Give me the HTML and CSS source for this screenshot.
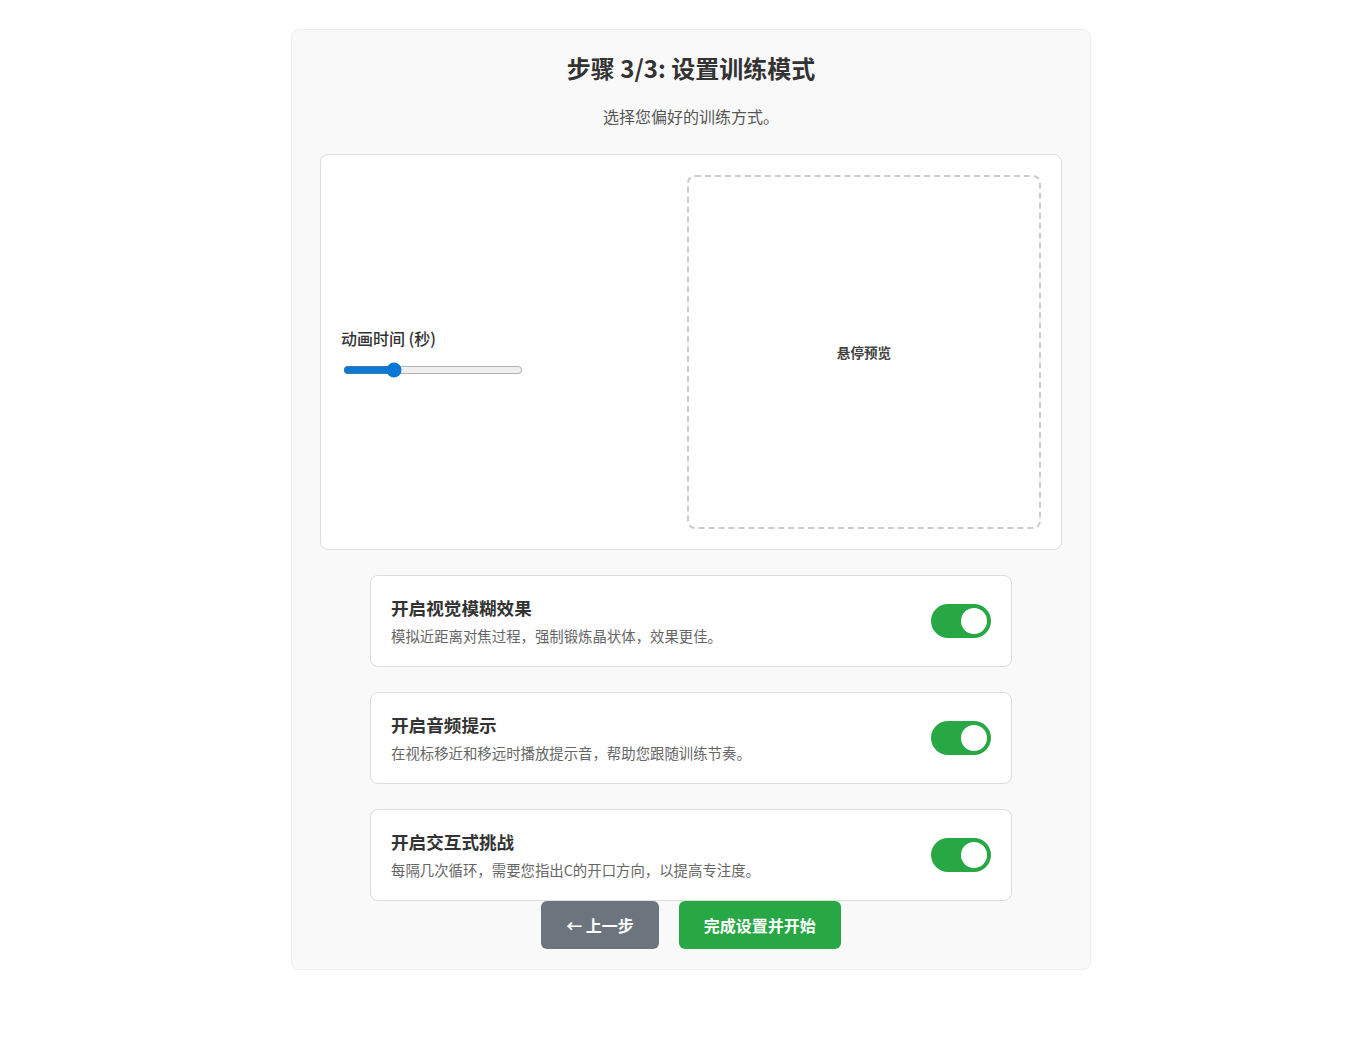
FILE: index.html
```html
<!DOCTYPE html>
<html lang="zh-CN">
<head>
    <meta charset="UTF-8">
    <meta name="viewport" content="width=device-width, initial-scale=1.0">
    <title>设置训练模式</title>
    <link rel="stylesheet" href="styles.css">
</head>
<body>
    <div class="setup-card">
        <h2 class="title">步骤 3/3: 设置训练模式</h2>
        <p class="subtitle">选择您偏好的训练方式。</p>

        <div class="preview-panel">
            <div class="controls">
                <label for="duration" class="control-label">动画时间 (秒)</label>
                <input type="range" id="duration" class="slider" min="0" max="100" value="26">
            </div>
            <div class="hover-box">
                <span class="hover-text">悬停预览</span>
            </div>
        </div>

        <div class="option">
            <div class="option-text">
                <p class="option-title">开启视觉模糊效果</p>
                <p class="option-desc">模拟近距离对焦过程，强制锻炼晶状体，效果更佳。</p>
            </div>
            <label class="switch">
                <input type="checkbox" checked>
                <span class="knob"></span>
            </label>
        </div>

        <div class="option">
            <div class="option-text">
                <p class="option-title">开启音频提示</p>
                <p class="option-desc">在视标移近和移远时播放提示音，帮助您跟随训练节奏。</p>
            </div>
            <label class="switch">
                <input type="checkbox" checked>
                <span class="knob"></span>
            </label>
        </div>

        <div class="option">
            <div class="option-text">
                <p class="option-title">开启交互式挑战</p>
                <p class="option-desc">每隔几次循环，需要您指出C的开口方向，以提高专注度。</p>
            </div>
            <label class="switch">
                <input type="checkbox" checked>
                <span class="knob"></span>
            </label>
        </div>

        <div class="actions">
            <button class="btn btn-back">&larr; 上一步</button>
            <button class="btn btn-start">完成设置并开始</button>
        </div>
    </div>
</body>
</html>
```

FILE: styles.css
```css
html, body {
    margin: 0;
    background: #fff;
    font-family: "Noto Sans CJK SC", "Noto Sans", sans-serif;
    color: #333;
}
body {
    padding: 29px 0 0 10px;
}
.setup-card {
    width: 742px;
    margin: 0 auto;
    padding: 21px 28px 20px 28px;
    background-color: #f9f9f9;
    border: 1px solid #eee;
    border-radius: 8px;
}
.title {
    margin: 0;
    text-align: center;
    font-size: 24px;
    line-height: 34px;
    font-weight: 700;
    color: #333;
}
.subtitle {
    margin: 19px 0 0 0;
    text-align: center;
    font-size: 16px;
    line-height: 24px;
    color: #555;
}
.preview-panel {
    margin-top: 26px;
    display: flex;
    align-items: center;
    gap: 20px;
    padding: 20px;
    background: #fff;
    border: 1px solid #ddd;
    border-radius: 8px;
}
.controls {
    flex: 1;
    display: flex;
    flex-direction: column;
    align-items: flex-start;
}
.control-label {
    font-size: 16px;
    line-height: 22px;
    font-weight: 500;
    color: #333;
    margin: 0 0 13px 0;
}
.slider {
    width: 180px;
    margin: 0 0 0 2px;
    accent-color: #0a78d4;
}
.hover-box {
    width: 350px;
    height: 350px;
    border: 2px dashed #ccc;
    border-radius: 8px;
    display: flex;
    align-items: center;
    justify-content: center;
}
.hover-text {
    font-size: 13.6px;
    font-weight: 700;
    color: #444;
}
.option {
    width: 600px;
    margin: 25px auto 0 auto;
    padding: 20px;
    display: flex;
    align-items: center;
    justify-content: space-between;
    background: #fff;
    border: 1px solid #ddd;
    border-radius: 8px;
}
.option-title {
    margin: 0;
    font-size: 17.6px;
    line-height: 24px;
    font-weight: 700;
    color: #333;
}
.option-desc {
    margin: 6px 0 0 0;
    font-size: 14.4px;
    line-height: 20px;
    color: #666;
}
.switch {
    position: relative;
    display: inline-block;
    width: 60px;
    height: 34px;
    flex-shrink: 0;
}
.switch input {
    opacity: 0;
    width: 0;
    height: 0;
}
.knob {
    position: absolute;
    inset: 0;
    background-color: #ccc;
    border-radius: 34px;
    cursor: pointer;
}
.knob::before {
    content: "";
    position: absolute;
    width: 26px;
    height: 26px;
    left: 4px;
    top: 4px;
    background: #fff;
    border-radius: 50%;
}
.switch input:checked + .knob {
    background-color: #28a745;
}
.switch input:checked + .knob::before {
    transform: translateX(26px);
}
.actions {
    display: flex;
    justify-content: center;
    gap: 20px;
}
.btn {
    padding: 12px 25px;
    font-family: inherit;
    font-size: 16px;
    line-height: 24px;
    font-weight: 700;
    color: #fff;
    border: none;
    border-radius: 6px;
    cursor: pointer;
}
.btn-back {
    background-color: #6c757d;
}
.btn-start {
    background-color: #28a745;
}
```
